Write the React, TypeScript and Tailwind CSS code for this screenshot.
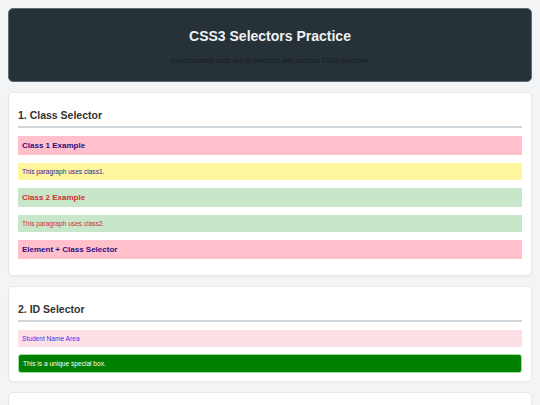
const font = { fontFamily: '"Liberation Sans", Arial, sans-serif' };

function Card({ title, children }: { title: string; children: React.ReactNode }) {
  return (
    <section className="mx-2 rounded-[5px] border border-[#e6e8eb] bg-white px-[9px] pt-[16px] pb-2 shadow-[0_1px_2px_rgba(0,0,0,0.04)]">
      <h2 className="border-b-2 border-[#cfd6db] pb-[5px] text-[10.5px] leading-[12px] font-bold text-[#333]">
        {title}
      </h2>
      <div className="mt-[8px] flex flex-col">{children}</div>
    </section>
  );
}

export default function App() {
  return (
    <div className="min-h-[405px] bg-[#f3f4f6] pt-2 pb-4" style={font}>
      <header className="mx-2 rounded-[5px] border border-[#5d6d75] bg-[#263238] pt-[19px] pb-[16px] text-center">
        <h1 className="text-[14px] leading-[16px] font-bold text-[#eef1f3]">CSS3 Selectors Practice</h1>
        <p className="mt-[13px] text-[6.6px] leading-[8px] text-[#161c20]">
          Understanding class and ID selectors with practical CSS3 examples
        </p>
      </header>

      <div className="mt-[10px] flex flex-col gap-[10px]">
        <Card title="1. Class Selector">
          <h3 className="mb-2 bg-[#ffc0cb] px-[4px] py-[5px] text-[8px] leading-[9px] font-bold text-[#2c0f86]">
            Class 1 Example
          </h3>
          <p className="mb-2 bg-[#fff59d] px-[4px] py-[5px] text-[6.6px] leading-[7px] text-[#2c1aa0]">
            This paragraph uses class1.
          </p>
          <h3 className="mb-2 bg-[#c8e6c9] px-[4px] py-[5px] text-[8px] leading-[9px] font-bold text-[#d32f2f]">
            Class 2 Example
          </h3>
          <p className="mb-2 bg-[#c8e6c9] px-[4px] py-[5px] text-[6.6px] leading-[7px] text-[#d32f2f]">
            This paragraph uses class2.
          </p>
          <h3 className="mb-2 bg-[#ffc0cb] px-[4px] py-[5px] text-[8px] leading-[9px] font-bold text-[#2c0f86]">
            Element + Class Selector
          </h3>
        </Card>

        <Card title="2. ID Selector">
          <div className="mb-[7px] bg-[#fde0e6] px-[4px] py-[5px] text-[6.6px] leading-[7px] text-[#4b2ee8]">
            Student Name Area
          </div>
          <div className="rounded-[3px] border border-[#9be29b] bg-[#008000] px-[4px] py-[5px] text-[6.6px] leading-[7px] text-white">
            This is a unique special box.
          </div>
        </Card>

        <Card title="3. Attribute Selector">
          <div className="h-4" />
        </Card>
      </div>
    </div>
  );
}
